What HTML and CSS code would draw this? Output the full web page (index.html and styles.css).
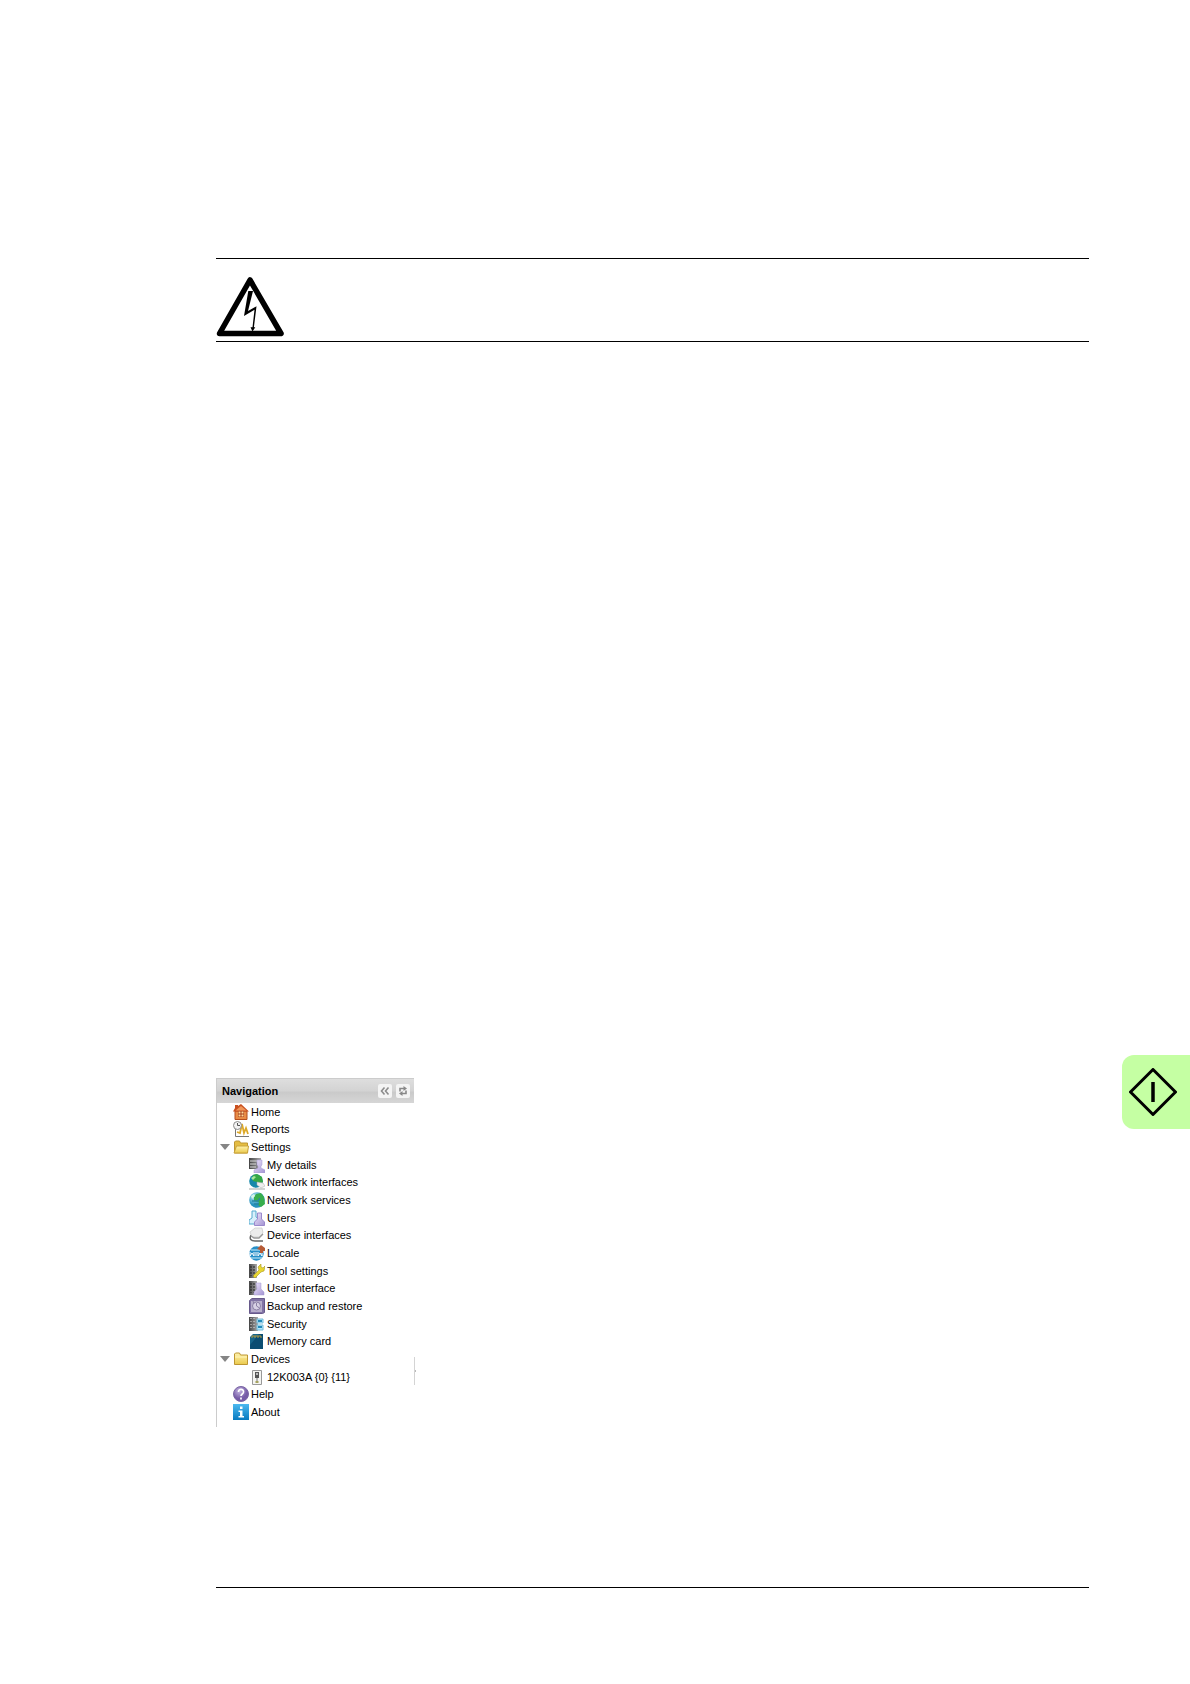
FILE: index.html
```
<!DOCTYPE html>
<html lang="en">
	<head>
		<title>Navigation</title>
		<meta charset="utf-8">
		<meta name="viewport" content="width=device-width, initial-scale=1.0">
		<link rel="stylesheet" href="styles.css">
	</head>
	<body>
		<svg width="0" height="0" class="defs" aria-hidden="true">
			<defs>
				<linearGradient id="gold" x2="0" y2="1"><stop offset="0" stop-color="#fff3ae"/><stop offset="1" stop-color="#eac94c"/></linearGradient>
				<linearGradient id="lilac" x2="1" y2="1"><stop offset="0" stop-color="#eee6fb"/><stop offset="1" stop-color="#a393d2"/></linearGradient>
				<linearGradient id="sky" x2="0" y2="1"><stop offset="0" stop-color="#4cb9ef"/><stop offset="1" stop-color="#0879bf"/></linearGradient>
				<linearGradient id="metal" x2="1" y2="0"><stop offset="0" stop-color="#444"/><stop offset="1" stop-color="#aaa"/></linearGradient>
				<radialGradient id="purple" cx=".4" cy=".3"><stop offset="0" stop-color="#c5b6e2"/><stop offset="1" stop-color="#765ba7"/></radialGradient>
				<radialGradient id="sea" cx=".35" cy=".3"><stop offset="0" stop-color="#bdeaf7"/><stop offset="1" stop-color="#2793be"/></radialGradient>
			</defs>
		</svg>

		<section class="warning">
			<svg class="warning-sign" viewBox="0 0 68 60" role="img" aria-label="Electricity warning">
				<path d="M34 3L65 56.500H3.500Z" fill="#fff" stroke="#000" stroke-width="5.500" stroke-linejoin="round"/>
				<path d="M32.300 14h4.700l-5 20 8.500-4.700-2.600 21h1.400L36.500 54.500l-2-4.200h2l2-17.500L28 39Z"/>
			</svg>
		</section>

		<main class="content">
			<nav class="panel">
				<header class="panel-header">
					<h1>Navigation</h1>
					<button type="button" aria-label="Collapse"><svg viewBox="0 0 14 14"><path d="M6.500 3.500L3.500 7l3 3.500M10.500 3.500L7.500 7l3 3.500" fill="none" stroke="#8c8c8c" stroke-width="1.600"/></svg></button>
					<button type="button" aria-label="Refresh"><svg viewBox="0 0 14 14"><path d="M4 7.500V4.500h4M10 6.500v3H6" fill="none" stroke="#888" stroke-width="1.600"/><path d="M7.500 2l3.500 2.500L7.500 7zM6.500 7L3 9.500 6.500 12z" fill="#888"/></svg></button>
				</header>
				<ul class="tree">
					<li><a href="#home"><svg viewBox="0 0 16 16"><path d="M2 7h12v8.500H2z" fill="#e88b45" stroke="#b54d1c"/><path d="M0 7.500L2 4V1h3v1l3-2 8 7.500z" fill="#c9501f"/><path d="M2.500 6.500L8 2l5.500 4.500z" fill="#ef9659"/><path d="M5 7h6v6H5z" fill="#a83d16"/><path d="M5.500 7.500h2v2h-2zM8.500 7.500h2v2h-2zM5.500 10.500h2v2h-2zM8.500 10.500h2v2h-2z" fill="#ffdc9b"/></svg>Home</a></li>
					<li><a href="#reports"><svg viewBox="0 0 16 16"><path d="M2.500 6v9.500H16" fill="none" stroke="#777"/><path d="M4 11l3 1 2-9 2 9 2-5 2 6" fill="none" stroke="#dda928" stroke-width="1.800"/><circle cx="4.500" cy="4.500" r="4" fill="#f2f2f2" stroke="#8b8b8b"/><path d="M4.500 2V4.500H7" fill="none" stroke="#555"/></svg>Reports</a></li>
					<li>
						<div class="branch"><button type="button" class="toggle" aria-label="Collapse Settings"></button><a href="#settings"><svg viewBox="0 0 16 16"><path d="M1.500 14V3l1-1h4l1 2h7v10z" fill="#e5bd42" stroke="#bd9632"/><path d="M1 14L3.500 7H15.500L14.500 14z" fill="url(#gold)" stroke="#c9a23b"/></svg>Settings</a></div>
						<ul>
							<li><a href="#my-details"><svg viewBox="0 0 16 16"><path d="M0 1h12v11H0z" fill="url(#metal)"/><path d="M1 4h8M1 7h6M1 10h6" stroke="#ddd"/><path d="M8 3h5v5l-1 1v2l4 2v3H5v-3l4-2V9L8 8z" fill="url(#lilac)" stroke="#a79ad0" stroke-width=".5"/></svg>My details</a></li>
							<li><a href="#network-interfaces"><svg viewBox="0 0 16 16"><circle cx="7" cy="7" r="6.800" fill="#1688aa"/><path d="M4 1l4-1 5 3 1 5-4 3-2-3-4-1-1-3z" fill="#36a845"/><path d="M2 4l3-2 2 1-3 3z" fill="#a8e79c"/><path d="M0 15h16" fill="none" stroke="#c2c6c5" stroke-width="1.500"/><path d="M8 8l6 1 2 3-4 2-4-3z" fill="#eee" stroke="#aaa" stroke-width=".5"/></svg>Network interfaces</a></li>
							<li><a href="#network-services"><svg viewBox="0 0 16 16"><circle cx="8" cy="8" r="7.800" fill="url(#sea)"/><path d="M7 2l5-1 3 4 1 7-4 3-3-2 1-3-5-1V5z" fill="#38ae4c"/><path d="M3 9h6l2-3M5 12h5" fill="none" stroke="#2985a4" stroke-width="1.300"/><path d="M2 4l3-2 1 2-3 3z" fill="#d5f6e8"/></svg>Network services</a></li>
							<li><a href="#users"><svg viewBox="0 0 16 16"><path d="M3 1h4v6l3 2v5H0v-4l3-2z" fill="#d7f0fb" stroke="#54a9cf"/><path d="M8.500 3h4v6l3 3v3.500H5.500V12l3-3z" fill="url(#lilac)" stroke="#9b89cc"/></svg>Users</a></li>
							<li><a href="#device-interfaces"><svg viewBox="0 0 16 16"><path d="M2 8c-2 4 0 6 4 6h8" fill="none" stroke="#666" stroke-width="1.500"/><path d="M1 5l5-4h7l1 5-4 4H3z" fill="#ececec" stroke="#c8c8c8" stroke-width=".7"/><path d="M2 9l3 2h5l4-4" fill="none" stroke="#999" stroke-width="1.300"/></svg>Device interfaces</a></li>
							<li><a href="#locale"><svg viewBox="0 0 16 16"><circle cx="7.500" cy="8.500" r="7.200" fill="#278fc8"/><path d="M2 5h11M2 13h11" stroke="#cceffc"/><path d="M1 7v4l2-3 2 3V7M7 7v4M9 7v4l2-3 2 3V7" fill="none" stroke="#fff"/><path d="M8 4l4-4 4 3v3h-2v2h-3V5z" fill="#b65b36"/></svg>Locale</a></li>
							<li><a href="#tool-settings"><svg viewBox="0 0 16 16"><path d="M0 1h8v14H0z" fill="url(#metal)"/><path d="M2 3v10M5 3v10" stroke="#222" stroke-dasharray="2 1"/><path d="M4 13l6-6-1-3 3-3v3l2 1 2-2-1 5-3 1-6 6z" fill="#e8d631" stroke="#aa9920" stroke-width=".6"/></svg>Tool settings</a></li>
							<li><a href="#user-interface"><svg viewBox="0 0 16 16"><path d="M0 1h8v14H0z" fill="url(#metal)"/><path d="M2 3v10M5 3v10" stroke="#222" stroke-dasharray="2 1"/><path d="M7 3h5v6l3 3v3H5v-3l3-3z" fill="url(#lilac)" stroke="#a79ad0" stroke-width=".5"/></svg>User interface</a></li>
							<li><a href="#backup"><svg viewBox="0 0 16 16"><path d="M.5 2.500L3 .5h12.500v14l-2 1H.5z" fill="#8173a5" stroke="#67598a"/><path d="M2 3h11v11H2z" fill="#b7aecb"/><circle cx="7.500" cy="8" r="4" fill="#d8d2e5" stroke="#8b80a5"/><path d="M7.500 5v3l3 2M4 3l1 3" fill="none" stroke="#8b80a5"/></svg>Backup and restore</a></li>
							<li><a href="#security"><svg viewBox="0 0 16 16"><path d="M0 1h9v14H0z" fill="url(#metal)"/><path d="M2 2v12M5 2v12" stroke="#ddd" stroke-dasharray="1 2"/><path d="M8 3h6v4H8zM8 9h6v5H8z" fill="#b7e8fb" stroke="#75bbd8"/><path d="M9 5h4M9 11h4" stroke="#258bbb" stroke-width="2"/></svg>Security</a></li>
							<li><a href="#memory-card"><svg viewBox="0 0 16 16"><path d="M1 4l3-3h10v15H1z" fill="#17658a"/><path d="M10 1h4v15H1v-4z" fill="#0b4d72"/><path d="M3 5V3h9v2M6 3v2M9 3v2" fill="none" stroke="#b59c3f"/></svg>Memory card</a></li>
						</ul>
					</li>
					<li>
						<div class="branch"><button type="button" class="toggle" aria-label="Collapse Devices"></button><a href="#devices"><svg viewBox="0 0 16 16"><path d="M1.500 13.500V3l1-1h4l1 2h7v9.500z" fill="url(#gold)" stroke="#bd9632"/><path d="M2 6h12" stroke="#fff5b8"/></svg>Devices</a></div>
						<ul>
							<li><a href="#device"><svg viewBox="0 0 16 16"><path d="M3.500 1.500h9v14h-9z" fill="#f4f4f1" stroke="#999"/><path d="M6 3h4v6H6z" fill="#555"/><path d="M7 4h2v2H7z" fill="#bbb"/><path d="M8 9v3" stroke="#777"/><path d="M6.500 12h3v2h-3z" fill="#a6a35f"/></svg>12K003A {0} {11}</a></li>
						</ul>
					</li>
					<li><a href="#help"><svg viewBox="0 0 16 16"><circle cx="8" cy="8" r="7.500" fill="url(#purple)" stroke="#7965a4"/><path d="M5.500 6c0-4 5.500-3 5 0 0 2-2.500 2-2.500 4M8 11.500v2" fill="none" stroke="#fff" stroke-width="1.700"/></svg>Help</a></li>
					<li><a href="#about"><svg viewBox="0 0 16 16"><path d="M0 0h16v16H0z" fill="url(#sky)"/><path d="M7 2.500h2.500V5H7zM5.500 6.500h4V12H11v1.500H5.500V12H7V8H5.500z" fill="#fff"/></svg>About</a></li>
				</ul>
				<span class="splitter"></span>
			</nav>
			<aside class="chapter-tab">
				<svg viewBox="0 0 48 48" role="img" aria-label="Start-up"><path d="M24 1.500L46.500 24 24 46.500 1.500 24Z" fill="none" stroke="#000" stroke-width="3" stroke-linejoin="round"/><path d="M24 14v20" stroke="#000" stroke-width="3.500"/></svg>
			</aside>
		</main>

		<hr class="footer-rule">
	</body>
</html>
```

FILE: styles.css
```
* {
	box-sizing: border-box;
}

body {
	margin: 0;
	padding: 258px 0 96px 216px;
	background-color: #fff;
	color: #000;
	font: 11px/16px "Liberation Sans", Arial, sans-serif;
}

ul {
	margin: 0;
	padding: 0;
	list-style: none;
}

button {
	padding: 0;
	border: 0;
	cursor: pointer;
}

.defs {
	display: block;
}

.warning {
	margin-right: 101px;
	padding: 18px 0 4px;
	border-top: 1px solid #000;
	border-bottom: 1px solid #000;
}

.warning-sign {
	display: block;
	width: 68px;
	height: 60px;
}

.content {
	display: flex;
	justify-content: space-between;
	align-items: flex-start;
	margin-top: 713px;
}

/* navigation tree */

.panel {
	position: relative;
	width: 198px;
	margin-top: 23px;
	padding-bottom: 6px;
	border-left: 1px solid #ccc;
}

.panel-header {
	display: flex;
	align-items: center;
	gap: 4px;
	height: 25px;
	padding: 0 4px 0 5px;
	border-top: 1px solid #ccc;
	background: linear-gradient(#dedede, #d3d3d3 50%, #cacaca 55%, #d6d6d6);
}

.panel-header h1 {
	flex: 1;
	margin: 0;
	font-size: 11px;
}

.panel-header button {
	width: 14px;
	height: 14px;
	border-radius: 2px;
	background-color: #f4f4f4;
}

.panel-header svg {
	display: block;
}

.tree {
	display: grid;
	grid-auto-rows: 1fr;
	min-height: 318px;
}

/* nested items share the rows of the outer grid */
.tree ul,
.tree li {
	display: contents;
}

.tree a {
	display: flex;
	align-items: center;
	gap: 2px;
	padding-left: 16px;
	color: inherit;
	text-decoration: none;
}

.tree a:hover {
	text-decoration: underline;
}

.tree svg {
	flex: none;
	width: 16px;
	height: 16px;
}

.tree ul a {
	padding-left: 32px;
}

.branch {
	display: flex;
	align-items: center;
	padding-left: 3px;
}

.branch a {
	padding-left: 3px;
}

.toggle {
	border: solid transparent;
	border-width: 6px 5px 0;
	border-top-color: #858585;
	background: none;
}

.splitter {
	position: absolute;
	right: -1px;
	bottom: 42px;
	width: 1px;
	height: 28px;
	background-color: #d4d4d4;
}

.splitter::after {
	content: "";
	position: absolute;
	top: 13px;
	left: 1px;
	width: 1px;
	height: 2px;
	background-color: #bbb;
}

/* chapter marker on the page edge */

.chapter-tab {
	width: 68px;
	padding: 13px 12px 13px 7px;
	border-radius: 12px 0 0 12px;
	background-color: #c5ffa3;
}

.chapter-tab svg {
	display: block;
	width: 48px;
	height: 48px;
}

.footer-rule {
	height: 1px;
	margin: 160px 101px 0 0;
	border: 0;
	background-color: #000;
}
```
